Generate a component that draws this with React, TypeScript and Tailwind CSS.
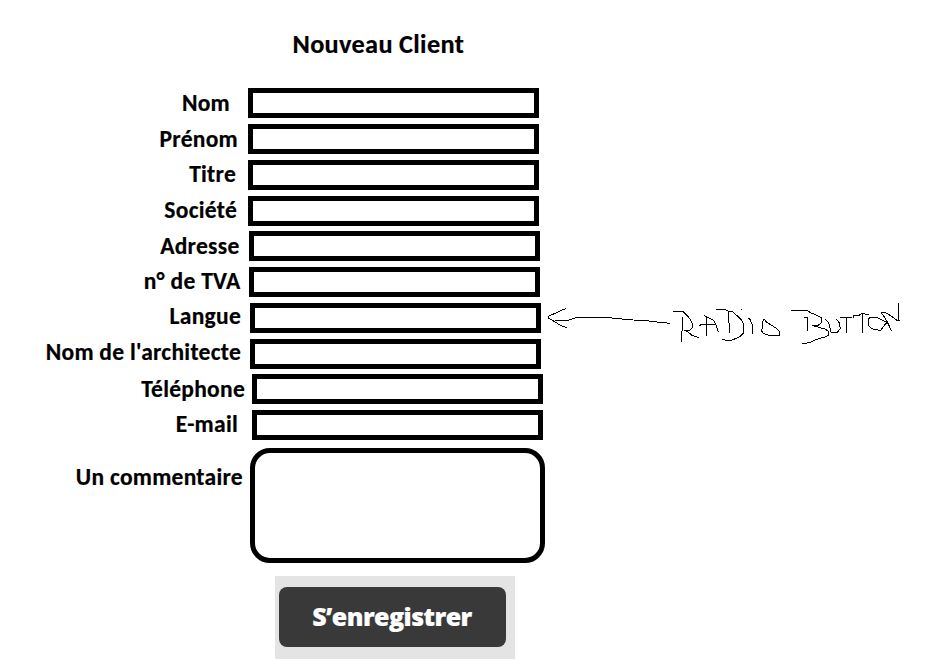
type Field = { label: string; row: string; text: string };

const fields: Field[] = [
  { label: "Nom", row: "", text: "pr-[18px]" },
  { label: "Prénom", row: "mt-1.5", text: "pr-[10px]" },
  { label: "Titre", row: "mt-1.5", text: "pr-[12px] -mt-px" },
  { label: "Société", row: "mt-1.5", text: "pr-[11px] -mt-px" },
  { label: "Adresse", row: "mt-[5px] pl-px", text: "pr-[9.5px]" },
  { label: "n° de TVA", row: "mt-1.5 pl-px", text: "pr-[8.5px] -mt-px" },
  { label: "Langue", row: "mt-1.5 pl-0.5", text: "pr-[9px] -mt-0.5" },
  { label: "Nom de l'architecte", row: "mt-1.5 pl-0.5", text: "pr-[9px] -mt-0.5" },
  { label: "Téléphone", row: "mt-[5px] pl-1", text: "pr-[7px]" },
  { label: "E-mail", row: "mt-1.5 pl-1", text: "pr-[14px] -mt-px" },
];

const labelBase = "w-[248px] shrink-0 text-right leading-[30px] whitespace-nowrap";

function HandwrittenNote() {
  return (
    <svg
      className="absolute -top-[13px] left-[540px]"
      width="370"
      height="65"
      viewBox="0 0 1110 195"
      fill="none"
      stroke="#000"
      strokeWidth="3"
      shapeRendering="crispEdges"
      aria-label="Radio button"
    >
      <path d="M78 56L62 62L45 70L24 79V84L46 96L62 107L80 113" />
      <path d="M45 91H83L112 82H196L235 86L280 90L320 92L352 96L390 100" />
      <g transform="translate(390 30)">
        <path d="M9 34H38L50 45L62 60L68 72V81L60 91H43L54 96L66 106L87 113" />
        <path d="M38 51V90L35 95V126" />
        <path d="M88 79L94 73H135M109 49V107M103 47L116 53L132 62L137 73L141 84L146 97" />
      </g>
      <g transform="translate(540 30)">
        <path d="M-12 28H15L26 34H36L49 45L62 57L70 70V99L60 110L46 116L34 121H18L6 118" />
        <path d="M26 37V66L29 72V99M63 28H66M85 54L91 60L96 73V102" />
        <path d="M132 57L128 66V81L124 91L130 100L145 105H179V96L168 84L155 76L140 67L132 57" />
      </g>
      <g transform="translate(735 30)">
        <path d="M18 31H65L78 39L92 44L109 53V69L98 77H82L98 81L119 87L131 94V105L119 111L98 117L75 127L52 132" />
        <path d="M57 52H66V92" />
        <path d="M121 58L131 69L138 96H158L166 85L163 69L154 57" />
        <path d="M166 52H202M184 52V98M205 53V46H222L232 40L253 45M231 43V98" />
        <path d="M274 52H254L249 60V75L260 86L287 92L294 81L306 67L290 60L274 52" />
        <path d="M319 93L313 78L302 57L289 38H302L320 49L334 60H344M341 9V62" />
      </g>
    </svg>
  );
}

export default function App() {
  return (
    <main className="h-[671px] w-[933px] overflow-hidden bg-white font-['Carlito','Lato',sans-serif] text-[23.5px] font-bold tracking-[0.28px] text-black [-webkit-text-stroke:0.2px]">
      <h1 className="h-[88px] pt-[29px] pl-[292.5px] text-[26.3px] leading-[30px] tracking-[0.32px]">
        Nouveau Client
      </h1>
      <form>
        {fields.map(({ label, row, text }) => (
          <div key={label} className={`relative flex h-[30px] ${row}`}>
            <label className={`${labelBase} ${text}`}>{label}</label>
            <div className="h-[30px] w-[291px] border-[5px] border-black" />
            {label === "Langue" && <HandwrittenNote />}
          </div>
        ))}
        <div className="mt-2 flex pl-0.5">
          <label className={`${labelBase} pt-[14px] pr-[7px]`}>Un commentaire</label>
          <div className="h-[115px] w-[295px] rounded-[20px] border-[5px] border-black" />
        </div>
        <div className="mt-[13px] ml-[275px] h-[83px] w-60 bg-[#e4e4e4] pt-[10.5px] pl-[3.5px]">
          <button
            type="button"
            className="block h-[60.5px] w-[227px] rounded-[8px] bg-[#393939] pb-px font-['Open_Sans',sans-serif] text-[25px] font-extrabold tracking-[-0.55px] text-white"
          >
            S’enregistrer
          </button>
        </div>
      </form>
    </main>
  );
}
